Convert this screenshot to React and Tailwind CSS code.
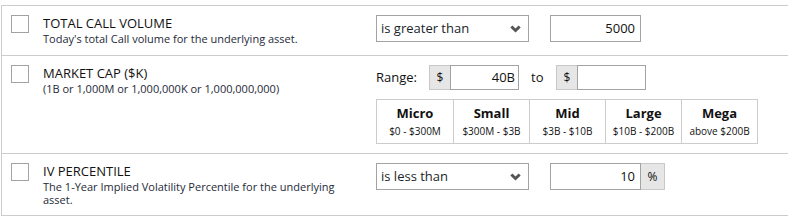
import React from "react";

function Chevron() {
  return (
    <svg width="11" height="8" viewBox="0 0 11 8" className="block">
      <path
        fill="#555"
        d="M0.3 2.6 L2.4 0.5 L5.5 3.6 L8.6 0.5 L10.7 2.6 L5.5 7.6 Z"
      />
    </svg>
  );
}

function Select({ value }) {
  return (
    <div className="flex h-[27px] w-[153px] items-center justify-between border border-[#a3a3a3] bg-white pl-[4px] pr-[7px] text-[13px] text-[#1a1f2b]">
      <span>{value}</span>
      <Chevron />
    </div>
  );
}

function Checkbox() {
  return <div className="h-[18px] w-[18px] shrink-0 border border-[#a3a3a3] bg-white" />;
}

function Left({ title, desc }) {
  return (
    <div className="flex w-[374px] shrink-0 pl-[9px]">
      <Checkbox />
      <div className="ml-[14px] w-[305px]">
        <div className="text-[13px] leading-[17px] text-[#111]">{title}</div>
        <div className="text-[11px] leading-[13px] text-[#1e2a38]">{desc}</div>
      </div>
    </div>
  );
}

const caps = [
  ["Micro", "$0 - $300M"],
  ["Small", "$300M - $3B"],
  ["Mid", "$3B - $10B"],
  ["Large", "$10B - $200B"],
  ["Mega", "above $200B"],
];

export default function App() {
  return (
    <div
      className="h-[219px] w-[788px] bg-white pl-px pt-[5px]"
      style={{ fontFamily: '"Open Sans", "Noto Sans", sans-serif' }}
    >
      <div className="border-l border-t border-[#cccccc]">
        <div className="flex h-[50px] border-b border-[#cccccc] pt-[9px]">
          <Left title="TOTAL CALL VOLUME" desc="Today's total Call volume for the underlying asset." />
          <div className="flex gap-[21px]">
            <Select value="is greater than" />
            <div className="flex h-[27px] w-[91px] items-center justify-end border border-[#a3a3a3] pr-[5px] text-[13px] text-[#111]">
              5000
            </div>
          </div>
        </div>

        <div className="flex h-[98px] border-b border-[#cccccc] pt-[9px]">
          <Left title="MARKET CAP ($K)" desc="(1B or 1,000M or 1,000,000K or 1,000,000,000)" />
          <div className="flex flex-col gap-[9px]">
            <div className="flex h-[25px] items-center text-[13px] text-[#111]">
              <span className="w-[53px]">Range:</span>
              <div className="flex h-[25px]">
                <div className="flex w-[21px] items-center justify-center border border-r-0 border-[#c8c8c8] bg-[#e6e6e6] text-[12px]">$</div>
                <div className="flex w-[69px] items-center justify-end border border-[#a3a3a3] pr-[3px]">40B</div>
              </div>
              <span className="ml-[12px] w-[25px]">to</span>
              <div className="flex h-[25px]">
                <div className="flex w-[21px] items-center justify-center border border-r-0 border-[#c8c8c8] bg-[#e6e6e6] text-[12px]">$</div>
                <div className="w-[69px] border border-[#a3a3a3]" />
              </div>
            </div>
            <div className="grid h-[45px] w-[382px] grid-cols-5 border border-[#cccccc]">
              {caps.map(([n, r], i) => (
                <div
                  key={n}
                  className={`flex flex-col items-center pt-[5px] text-[#111] ${i > 0 ? "border-l border-[#cccccc]" : ""}`}
                >
                  <span className="text-[13px] font-bold leading-[17px]">{n}</span>
                  <span className="mt-[2px] text-[10px] leading-[14px]">{r}</span>
                </div>
              ))}
            </div>
          </div>
        </div>

        <div className="flex h-[62px] border-b border-[#cccccc] pt-[9px]">
          <Left
            title="IV PERCENTILE"
            desc="The 1-Year Implied Volatility Percentile for the underlying asset."
          />
          <div className="flex gap-[21px]">
            <Select value="is less than" />
            <div className="flex h-[27px]">
              <div className="flex w-[91px] items-center justify-end border border-[#a3a3a3] pr-[5px] text-[13px] text-[#111]">
                10
              </div>
              <div className="flex w-[24px] items-center justify-center border border-l-0 border-[#c8c8c8] bg-[#e6e6e6] text-[12px] text-[#111]">
                %
              </div>
            </div>
          </div>
        </div>
      </div>
    </div>
  );
}
